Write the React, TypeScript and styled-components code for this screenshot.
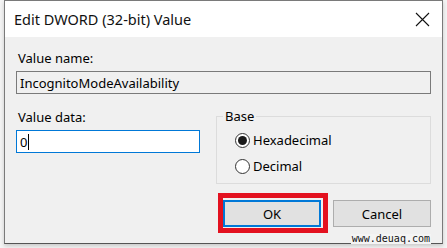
import React from "react";
import styled, { createGlobalStyle } from "styled-components";

const Global = createGlobalStyle`
  html, body { margin: 0; padding: 0; background: #f4f4f4; }
  body { font-family: "Noto Sans", "Open Sans", sans-serif; }
  * { box-sizing: border-box; }
`;

const Page = styled.div`
  width: 447px;
  height: 248px;
  padding: 0 4px 0 4px;
  position: relative;
  overflow: hidden;
`;

const Window = styled.div`
  width: 439px;
  height: 244px;
  border: 1px solid #7a7a7a;
  border-bottom-color: #555;
  background: #f0f0f0;
  display: flex;
  flex-direction: column;
  box-shadow: 0 2px 4px rgba(0, 0, 0, 0.18);
`;

const TitleBar = styled.div`
  height: 36px;
  background: #ffffff;
  display: flex;
  align-items: center;
  justify-content: space-between;
  padding: 0 12px 0 9px;
  flex-shrink: 0;
`;

const Title = styled.span`
  font-size: 14.5px;
  color: #111;
`;

const Body = styled.div`
  flex: 1;
  padding: 12px 11px 0 11px;
  display: flex;
  flex-direction: column;
`;

const Label = styled.div`
  font-size: 13px;
  color: #000;
  padding-left: 2px;
  height: 22px;
  line-height: 18px;
`;

const TextBox = styled.div<{ $focused?: boolean; $disabled?: boolean }>`
  height: 23px;
  border: 1px solid ${(p) => (p.$focused ? "#0078d7" : "#7a7a7a")};
  background: ${(p) => (p.$disabled ? "#f0f0f0" : "#ffffff")};
  font-size: 13px;
  padding-left: 3px;
  color: #000;
  display: flex;
  align-items: center;
`;

const Caret = styled.span`
  display: inline-block;
  width: 1px;
  height: 16px;
  background: #000;
  margin-left: 1px;
`;

const Row = styled.div`
  display: grid;
  grid-template-columns: 184px 215px;
  column-gap: 16px;
  margin-top: 14px;
`;

const DataColumn = styled.div`
  display: flex;
  flex-direction: column;
`;

const GroupBox = styled.fieldset`
  margin: 1px 0 0 0;
  padding: 6px 0 6px 0;
  border: 1px solid #dcdcdc;
  display: flex;
  flex-direction: column;
  gap: 4px;
`;

const Legend = styled.legend`
  font-size: 13px;
  padding: 0 2px;
  margin-left: 6px;
  line-height: 14px;
`;

const RadioRow = styled.label`
  display: flex;
  align-items: center;
  gap: 3px;
  margin-left: 18px;
  font-size: 13px;
  height: 22px;
  color: #000;
`;

const RadioCircle = styled.span<{ $checked?: boolean }>`
  width: 15px;
  height: 15px;
  border-radius: 50%;
  border: 1px solid #333;
  background: #fff;
  display: flex;
  align-items: center;
  justify-content: center;
  flex-shrink: 0;
  &::after {
    content: "";
    width: 9px;
    height: 9px;
    border-radius: 50%;
    background: ${(p) => (p.$checked ? "#1a1a1a" : "transparent")};
  }
`;

const Buttons = styled.div`
  display: flex;
  justify-content: flex-end;
  gap: 12px;
  margin-top: 16px;
`;

const ButtonWrap = styled.div`
  position: relative;
  display: flex;
`;

const Button = styled.button<{ $default?: boolean }>`
  width: 98px;
  height: 27px;
  margin: 0;
  font-family: inherit;
  font-size: 13px;
  color: #000;
  background: #e1e1e1;
  border: ${(p) => (p.$default ? "2px solid #0078d7" : "1px solid #adadad")};
  padding: 0;
`;

const Highlight = styled.span`
  position: absolute;
  left: -5px;
  top: -7px;
  right: -7px;
  bottom: -6px;
  border: 5px solid #e3111f;
  pointer-events: none;
`;

const Watermark = styled.span`
  position: absolute;
  right: 16px;
  bottom: 4px;
  font-family: "DejaVu Sans Mono", monospace;
  font-size: 10px;
  color: #111;
  background: #f4f4f4;
  padding: 0 1px;
  line-height: 10px;
`;

const CloseIcon = () => (
  <svg width="15" height="15" viewBox="0 0 15 15">
    <path d="M1 1 L14 14 M14 1 L1 14" stroke="#111" strokeWidth="1.1" />
  </svg>
);

export default function App() {
  return (
    <>
      <Global />
      <Page>
        <Window>
          <TitleBar>
            <Title>Edit DWORD (32-bit) Value</Title>
            <CloseIcon />
          </TitleBar>
          <Body>
            <Label>Value name:</Label>
            <TextBox $disabled>IncognitoModeAvailability</TextBox>
            <Row>
              <DataColumn>
                <Label>Value data:</Label>
                <TextBox $focused>
                  0<Caret />
                </TextBox>
              </DataColumn>
              <GroupBox>
                <Legend>Base</Legend>
                <RadioRow>
                  <RadioCircle $checked />
                  Hexadecimal
                </RadioRow>
                <RadioRow>
                  <RadioCircle />
                  Decimal
                </RadioRow>
              </GroupBox>
            </Row>
            <Buttons>
              <ButtonWrap>
                <Button $default>OK</Button>
                <Highlight />
              </ButtonWrap>
              <Button>Cancel</Button>
            </Buttons>
          </Body>
        </Window>
        <Watermark>www.deuaq.com</Watermark>
      </Page>
    </>
  );
}
